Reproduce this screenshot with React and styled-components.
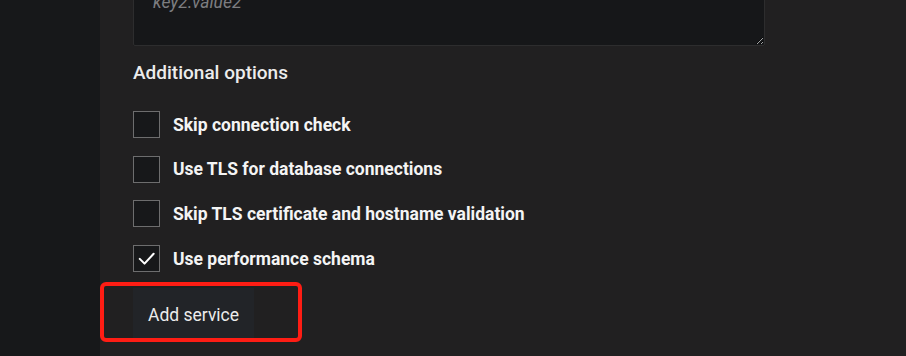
import styled, { createGlobalStyle } from "styled-components";

const GlobalStyle = createGlobalStyle`
  html, body {
    margin: 0;
    padding: 0;
    background: #17181a;
    font-family: Roboto, "Liberation Sans", sans-serif;
    overflow: hidden;
  }
`;

const options = [
  { label: "Skip connection check", checked: false },
  { label: "Use TLS for database connections", checked: false },
  { label: "Skip TLS certificate and hostname validation", checked: false },
  { label: "Use performance schema", checked: true },
];

export default function App() {
  return (
    <>
      <GlobalStyle />
      <Page>
        <Sidebar />
        <Main>
          <Form>
            <LabelsArea placeholder={"key1:value1\nkey2:value2"} />
            <SectionTitle>Additional options</SectionTitle>
            <OptionList>
              {options.map((opt) => (
                <OptionRow key={opt.label}>
                  <Box>
                    {opt.checked && (
                      <svg width="19" height="19" viewBox="0 0 24 24" fill="none">
                        <path d="M3.5 12.5 L9.5 18.5 L21 6" stroke="#fff" strokeWidth="2.6" strokeLinecap="round" strokeLinejoin="round" />
                      </svg>
                    )}
                  </Box>
                  <OptionLabel>{opt.label}</OptionLabel>
                </OptionRow>
              ))}
            </OptionList>
            <Highlight>
              <AddButton>Add service</AddButton>
            </Highlight>
          </Form>
        </Main>
      </Page>
    </>
  );
}

const Page = styled.div`
  display: flex;
  height: 356px;
`;

const Sidebar = styled.div`
  width: 100px;
  flex-shrink: 0;
  background: #17181a;
`;

const Main = styled.div`
  flex: 1;
  background: #212021;
  padding-left: 33px;
`;

const Form = styled.div`
  width: 632px;
  display: flex;
  flex-direction: column;
`;

const LabelsArea = styled.textarea`
  box-sizing: border-box;
  flex-shrink: 0;
  width: 632px;
  height: 112px;
  margin-top: -66px;
  padding: 25px 19px;
  background: #161719;
  border: 1px solid #2d2d2e;
  border-radius: 2px;
  color: #e0e0e0;
  color-scheme: dark;
  font-family: Roboto, "Liberation Sans", sans-serif;
  font-size: 17.5px;
  line-height: 28px;
  outline: none;

  &::placeholder {
    color: #7c7d80;
    font-style: italic;
  }
`;

const SectionTitle = styled.div`
  margin-top: 16px;
  color: #ececec;
  font-size: 19px;
  font-weight: 500;
  line-height: 22px;
`;

const OptionList = styled.div`
  display: flex;
  flex-direction: column;
  gap: 17.7px;
  margin-top: 27px;
`;

const OptionRow = styled.label`
  display: flex;
  align-items: center;
  gap: 13px;
  height: 27px;
`;

const Box = styled.span`
  box-sizing: border-box;
  width: 27px;
  height: 27px;
  border: 1px solid #6d6d6e;
  background: #17181a;
  display: flex;
  align-items: center;
  justify-content: center;
`;

const OptionLabel = styled.span`
  color: #f4f4f4;
  font-size: 17.5px;
  font-weight: 700;
`;

const Highlight = styled.div`
  align-self: flex-start;
  flex-shrink: 0;
  margin: 10px 0 0 -33px;
  padding: 2px 44px 0 29px;
  border: 4px solid #fe1d14;
  border-radius: 6px;
`;

const AddButton = styled.button`
  display: block;
  height: 50px;
  padding: 4px 15px 0;
  border: none;
  background: #222428;
  color: #ececec;
  font-family: Roboto, "Liberation Sans", sans-serif;
  font-size: 17.5px;
  font-weight: 400;
  cursor: pointer;
`;
